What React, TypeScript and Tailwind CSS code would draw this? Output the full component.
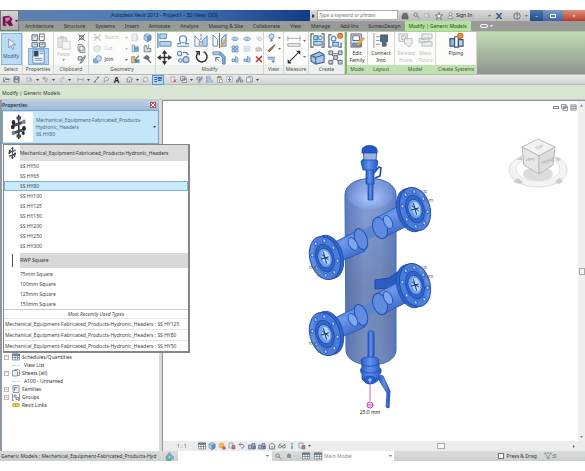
import React from 'react';

type IconProps = { name: string; className?: string };

const BLUE = '#5588c0';
const DARK = '#5c6570';
const PALE = '#b9d2ea';
const GREY = '#c4c7ca';

const glyphs: Record<string, React.ReactNode> = {
  cursor: <path d="M5 1v12l3-3 2 5 2-1-2-5h4z" fill="#fff" stroke="#5b7ea8" />,
  typeProps: (
    <g stroke={DARK} fill="#dfe7ee">
      <path d="M1 2h6v6H1zM1 10h6v5H1zM9 10h6v5H9z" />
      <path d="M9 1h5v7H9z" fill="#fff" />
      <path d="M3 4h2M3 12h3M10 4h3M10 12h4" stroke={BLUE} />
    </g>
  ),
  propPanel: (
    <g>
      <path d="M2 1h12v14H2z" fill="#fff" stroke={BLUE} />
      <path d="M3 2h5v6H3z" fill="#31485f" />
      <path d="M9 3h4M9 5h4M4 10h8M4 12h8" stroke={BLUE} />
    </g>
  ),
  paste: (
    <g stroke={GREY}>
      <path d="M1 2h10v11H1z" fill="#e4e4e4" />
      <path d="M4 0h4v3H4z" fill="#d0d0d0" />
      <path d="M6 6h9v9H6z" fill="#f6f6f6" />
    </g>
  ),
  cut: <path d="M2 2l12 12M14 2L2 14M5 5h6v6H5z" stroke={DARK} strokeWidth="1.6" fill="none" />,
  copy: <path d="M2 1h7l2 3v8H2zM5 4h7l2 3v8H5z" fill="#fff" stroke={DARK} strokeWidth="1.3" />,
  brush: <path d="M2 3h7v6H2zM14 1l-6 9-3 5 5-3 5-9z" fill="#d4dae0" stroke={DARK} strokeWidth="1.4" />,
  notch: <path d="M2 2l12 12M14 2L2 14M1 8h6" stroke={GREY} strokeWidth="2" fill="none" />,
  cutGeo: <path d="M2 6l5-3 6 2-2 7-5 2-4-3z" fill="#eceeef" stroke={GREY} strokeWidth="1.5" />,
  join: (
    <g stroke={BLUE} strokeWidth="1.3">
      <path d="M1 7h8v7H1z" fill="#8db9e2" />
      <circle cx="10" cy="6" r="5" fill="#c4def5" />
    </g>
  ),
  cope: <path d="M2 2h8v12H2zM12 4v9" fill="#f2f2f2" stroke={GREY} strokeWidth="1.4" />,
  cube: (
    <g stroke={BLUE} strokeWidth="1.2">
      <path d="M2 4l6-3 6 3v8l-6 3-6-3z" fill={PALE} />
      <path d="M2 4l6 3 6-3M8 7v8" fill="none" />
      <path d="M8 7l6-3v8l-6 3z" fill="#6391c0" />
    </g>
  ),
  wall: (
    <g stroke={BLUE} strokeWidth="1.3">
      <path d="M2 2h4v12H2z" fill="#e9f2fb" />
      <path d="M6 5h7v3H6zM6 9h7v4H6z" fill="#8db3d9" />
    </g>
  ),
  split: (
    <g stroke={DARK} strokeWidth="1.2">
      <path d="M2 3h5v5h7v6H2z" fill="#d2d9e0" />
      <path d="M10 1v6" />
    </g>
  ),
  paint: (
    <g>
      <path d="M1 3h6v11H1z" fill="#f3c74d" stroke={DARK} />
      <path d="M7 8h8v6H7z" fill={BLUE} />
      <path d="M14 1L7 9" stroke={DARK} strokeWidth="2" />
    </g>
  ),
  hammer: <path d="M2 5l5-4 4 4-3 3zM8 7l6 7" stroke={DARK} strokeWidth="2.2" fill="#7b8794" />,
  align: (
    <g stroke={BLUE}>
      <path d="M1 0v16" strokeWidth="1.4" />
      <path d="M3 1h7v5H3zM3 9h12v5H3z" fill={PALE} />
    </g>
  ),
  offset: (
    <path d="M1 14h14M1 11h4c0-2-1-3-1-5a4 4 0 018 0c0 2-1 3-1 5h4M6 10h4" fill="none" stroke={BLUE} strokeWidth="1.4" />
  ),
  mirror: (
    <g stroke={BLUE}>
      <path d="M1 2l5 5v7H1z" fill="#fff" />
      <path d="M15 2l-5 5v7h5z" fill={PALE} />
      <path d="M8 0v16" stroke={DARK} strokeDasharray="3 1" />
    </g>
  ),
  mirrorPick: (
    <g stroke={BLUE}>
      <path d="M1 2l5 5v7H1z" fill="#fff" />
      <path d="M15 1l-5 5v8h5z" fill={PALE} />
      <path d="M8 0v16" stroke={DARK} />
      <path d="M15 7l-6 8" stroke="#e0a63c" strokeWidth="2.4" />
    </g>
  ),
  move: (
    <g fill="#30343a">
      <path d="M8 0l3 4H5zM8 16l3-4H5zM0 8l4-3v6zM16 8l-4-3v6z" />
      <path d="M8 3v10M3 8h10" stroke="#30343a" strokeWidth="1.6" />
    </g>
  ),
  copyMod: (
    <g stroke={BLUE} fill="#eef5fb" strokeWidth="1.3">
      <circle cx="4" cy="4" r="2.6" />
      <circle cx="5" cy="12" r="2" />
      <circle cx="11.500" cy="11" r="3.4" fill={PALE} />
      <path d="M8 3c3-1 5 0 6 3" stroke={DARK} fill="none" />
    </g>
  ),
  rotate: (
    <g fill="none" stroke="#30343a" strokeWidth="1.7">
      <path d="M5 3a6 6 0 106-1" />
      <path d="M2 2l4 0v4" />
    </g>
  ),
  trim: (
    <g stroke={BLUE}>
      <path d="M1 2h8v3H1z" fill={PALE} />
      <path d="M9 2l5 5v8h-3V8L8 5z" fill="#7facd8" />
      <path d="M4 8l4 4M4 12V8h4" fill="none" stroke={DARK} />
    </g>
  ),
  oval: <path d="M1 8c3-5 11-5 14 0-3 4-11 4-14 0zM5 8h6" fill="#e6f0f9" stroke={BLUE} strokeWidth="1.6" />,
  grid: <path d="M2 2h5v5H2zM9 2h5v5H9zM2 9h5v5H2zM9 9h5v5H9z" fill={PALE} stroke={BLUE} strokeWidth="1.5" />,
  box: <path d="M2 3h12v10H2zM5 6h6v4H5z" fill="#f1f1f1" stroke={GREY} strokeWidth="1.2" />,
  viewMax: <path d="M2 2h12v12H2zM2 6h12M2 10h12" fill="#eee" stroke="#85888c" strokeWidth="2" />,
  pin: <path d="M3 2l5 6M10 3l4 5-3 4-5-4zM3 6l5 6" fill="#eee" stroke="#aeb1b5" strokeWidth="1.2" />,
  pin2: <path d="M2 6h8v6H2zM8 3l5 5v5" fill="#ecdcdc" stroke="#a99a9e" strokeWidth="1.4" />,
  scale: <path d="M2 13h5V8H2zM9 14V3l5 3v8z" fill={PALE} stroke={BLUE} strokeWidth="1.5" />,
  redx: <path d="M2 3l12 11M14 2L2 14" stroke="#c93434" strokeWidth="3.2" />,
  bulb: (
    <g>
      <circle cx="8" cy="6" r="4.500" fill="#b9dcf5" stroke={BLUE} strokeWidth="1.3" />
      <path d="M6 11h4v4H6z" fill="#77818c" />
    </g>
  ),
  tint: <path d="M14 1l-5 8-5 5-2-3 5-4z" fill="#b98545" stroke="#4d4133" strokeWidth="1.3" />,
  lines: <path d="M1 4h13M1 7h13M8 11h6M11 9v5" stroke={BLUE} strokeWidth="1.8" />,
  ruler: <path d="M1 2v6M15 2v6M1 5h14M1 11h14v3H1z" stroke="#9aa0a6" fill="#eef0f2" />,
  measure: (
    <g stroke="#30343a" strokeWidth="1.3" fill="#30343a">
      <path d="M3 13L13 3" />
      <path d="M1 11l4 4-4 0zM11 1l4 4V1z" strokeWidth="0.500" />
    </g>
  ),
  group: (
    <g stroke={BLUE} strokeWidth="1.3">
      <path d="M4 1H1v14h3M12 1h3v14h-3" fill="none" stroke={DARK} />
      <path d="M4 3h4v4H4zM4 9h9v4H4z" fill={PALE} />
      <circle cx="11" cy="5" r="2" fill="#fff" />
    </g>
  ),
  similar: (
    <g stroke={BLUE} strokeWidth="1.3">
      <path d="M4 2H1v13h3M11 15h3v-5" fill="none" stroke={DARK} />
      <circle cx="6" cy="6" r="2.500" fill="#fff" />
      <path d="M5 10h6v4H5z" fill={PALE} />
      <circle cx="13" cy="3" r="2.600" fill="#ee8e48" stroke="#d06a22" />
    </g>
  ),
  parts: (
    <g stroke="#3e6893" strokeWidth="1.2">
      <path d="M1 6l9-4 5 3v8l-9 2-5-3z" fill="#a9c9e6" />
      <path d="M1 6l5 2v7M6 8l9-3" fill="none" />
    </g>
  ),
  assembly: (
    <g stroke={DARK} fill={PALE}>
      <path d="M3 4l9 9M12 4l-9 9M3 4h10" />
      <path d="M1 1h4v4H1zM11 1h4v4h-4zM1 11h4v4H1zM11 11h4v4h-4zM6 6h4v4H6z" />
    </g>
  ),
  editFamily: (
    <g stroke={DARK}>
      <path d="M1 1h11v14H1z" fill="#d7e1eb" />
      <path d="M3 3h7v5H3z" fill="#fff" />
      <path d="M3 11h8v3H3z" fill="#8ba5bf" />
      <path d="M15 5l-7 8" stroke="#e0a63c" strokeWidth="2.600" />
    </g>
  ),
  connect: (
    <g stroke={DARK}>
      <path d="M1 0v16M3 4h4M3 8h4M3 12h4" stroke="#8c949d" />
      <path d="M8 2h8v7h-2v5h-4V9H8z" fill="#4f6880" />
    </g>
  ),
  host: (
    <g stroke="#b6babd" fill="#ebedee">
      <path d="M1 1h9v8H1zM4 3h4v4H4z" />
      <path d="M7 6h8v5l-3 4-5-4z" />
    </g>
  ),
  floors: (
    <g stroke="#b6babd" fill="#ebedee">
      <path d="M4 1h11v5L4 7zM1 6l11-1v4L1 10zM4 10l11-1v5H4z" />
    </g>
  ),
  piping: (
    <g stroke="#36536f" strokeWidth="1.2">
      <path d="M1 6h5v8H1z" fill="#8fb6dc" />
      <path d="M6 4h4v11H6z" fill="#fff" />
      <path d="M10 7h5v7h-5z" fill="#b8d2ea" />
      <circle cx="12" cy="3" r="2.800" fill="#ee8e48" stroke="#d06a22" />
    </g>
  ),
  open: <path d="M1 13V4h5l1 2h7v2H5zM5 8h10l-3 5H1z" fill="#eef0f2" stroke={DARK} strokeWidth="1.3" />,
  save: (
    <g stroke={DARK} strokeWidth="1.4">
      <path d="M2 2h12v12H2z" fill="#8c98a8" />
      <path d="M5 2h6v4H5zM4 9h8v5H4z" fill="#fff" />
    </g>
  ),
  sync: <path d="M2 4h8v8H2zM8 9l4-4 2 7z" fill="#e4e4e4" stroke="#999da1" strokeWidth="1.3" />,
  undo: <path d="M2 5h8a4 4 0 010 7H6M2 5l4-4M2 5l4 4" fill="none" stroke="#70757b" strokeWidth="1.6" />,
  redo: <path d="M14 5H6a4 4 0 000 7h4M14 5l-4-4M14 5l-4 4" fill="none" stroke="#a8abae" strokeWidth="1.5" />,
  dim: <path d="M2 4v8M14 4v8M2 8h12" fill="none" stroke="#8d9196" strokeWidth="1.5" />,
  line: <path d="M2 14L14 2M2 14l5-1M14 2L9 3" stroke={DARK} strokeWidth="1.8" fill="none" />,
  tag: <path d="M3 8a5 4 0 119 1l-5 1-4 4z" fill="#f2f2f2" stroke="#666b70" strokeWidth="1.4" />,
  home: <path d="M1 8l7-6 7 6M3 7v7h10V7M8 8v6" fill="#eee" stroke={DARK} strokeWidth="1.5" />,
  section: <path d="M3 8a5 5 0 1110 0 5 5 0 01-10 0zM2 14l4-3" fill="#eee" stroke="#85898e" strokeWidth="1.5" />,
  thin: <path d="M1 3h5M1 7h5M1 11h5M8 3h7v3H8zM8 9h7" stroke="#2d5e93" strokeWidth="2" fill="#6f9fcd" />,
  closeWin: (
    <g>
      <path d="M2 2h9v11H2z" fill="#eee" stroke="#777" />
      <path d="M8 8l6 6M14 8l-6 6" stroke="#cf3a3a" strokeWidth="2" />
    </g>
  ),
  windows: <path d="M1 1h10v9H1zM5 5h10v10H5zM7 8h6" fill="#f4f4f4" stroke={DARK} strokeWidth="1.5" />,
  clip: (
    <g stroke={DARK}>
      <path d="M3 2h9v13H3z" fill="#eee6cc" />
      <path d="M5 0h5v4H5z" fill="#b98c45" />
      <path d="M8 8h6v7H8z" fill="#fff" />
    </g>
  ),
  download: (
    <g>
      <path d="M2 1h12v12H2z" fill="#fff" stroke={DARK} />
      <path d="M8 3v7M5 7l3 4 3-4" fill="none" stroke="#2f70b4" strokeWidth="2" />
    </g>
  ),
  people: <path d="M6 2h4v4H6zM1 9h5v5H1zM10 9h5v5h-5zM8 6v3M3 9h10" fill="#c0c5ca" stroke={DARK} strokeWidth="1.3" />,
  binoc: <path d="M2 14V8l3-6h2v12zM9 14V2h2l3 6v6z" fill="#6a6f76" stroke="#3b4047" />,
  key: (
    <g fill="none" stroke="#5d6269" strokeWidth="1.6">
      <circle cx="6" cy="6" r="4" />
      <path d="M9 9l6 5" />
    </g>
  ),
  star: <path d="M8 1l2 5h5l-4 3 2 6-5-4-5 4 2-6-4-3h5z" fill="#f6f6f6" stroke="#4b5057" strokeWidth="1.3" />,
  user: (
    <g fill="#e7e7e7" stroke="#60656b" strokeWidth="1.3">
      <circle cx="8" cy="5" r="3.500" />
      <path d="M2 15c0-8 12-8 12 0z" />
    </g>
  ),
  exchange: <path d="M1 2h4l3 4 3-4h4l-5 6 5 6h-4l-3-4-3 4H1l5-6z" fill="#3c5a86" />,
  help: (
    <g fill="none" stroke="#525c68" strokeWidth="1.5">
      <circle cx="8" cy="8" r="6.500" />
      <path d="M6 6c0-3 5-2 4 0l-2 3M8 11v2" />
    </g>
  ),
  schedule: (
    <g stroke="#5a6a7a" strokeWidth="1.3">
      <path d="M1 2h14v12H1z" fill="#fff" />
      <path d="M1 2h14v3H1z" fill="#7d8b99" />
      <path d="M1 9h14M6 5v9M11 5v9" />
    </g>
  ),
  sheets: <path d="M1 3h8l2 2v9H1zM5 1h8l2 2v10h-4" fill="#eef1f4" stroke="#5b646d" strokeWidth="1.3" />,
  families: <path d="M2 1h12v14H2zM5 12V5h6M5 8h4" fill="#f3f3f3" stroke="#6b7178" strokeWidth="1.4" />,
  groups: <path d="M1 1v14h3M15 1v14h-3M4 4h4v4H4zM8 9h5v4H8z" fill="#e7eaed" stroke="#6b7178" strokeWidth="1.4" />,
  link: (
    <g fill="#f6d35c" stroke="#b78b14" strokeWidth="1.4">
      <rect x="1" y="5" width="8" height="6" rx="3" />
      <rect x="7" y="5" width="8" height="6" rx="3" />
    </g>
  ),
  recycle: <path d="M8 1l4 5-3 2-1-3-3 4-3-1zM2 9l4 1-1 3h4v2H3zM10 14l-1-4 5-3 1 5z" fill="#7fc3cf" stroke="#3c8190" />,
  sun: (
    <g>
      <circle cx="7" cy="7" r="5" fill="#f7bd58" stroke="#cf7f22" />
      <path d="M9 9h6v6H9z" fill="#cd5544" />
    </g>
  ),
  shadow: (
    <g stroke="#576b80">
      <path d="M2 2h8v10H2z" fill="#e4ecf3" />
      <path d="M8 7h6v7H8z" fill="#d47464" />
    </g>
  ),
  crop: (
    <g stroke="#48698d" strokeWidth="1.3">
      <path d="M1 6h6v8H1zM8 3h6v11H8z" fill="#9dbbd9" />
      <path d="M11 8h4v5h-4z" fill="#d56a56" />
    </g>
  ),
  glasses: (
    <g fill="#d4e5e2" stroke="#55636b" strokeWidth="1.4">
      <circle cx="4" cy="9" r="3" />
      <circle cx="12" cy="9" r="3" />
      <path d="M2 6l3-3M14 6l-3-3M7 9h2" />
    </g>
  ),
  info: <path d="M6 2h4v3H6zM6 7h4v7H6z" fill="#71a6d4" />,
  filter: <path d="M1 2h14l-5 6v6l-4-2V8z" fill="#d5d9dd" stroke="#666c73" strokeWidth="1.3" />,
  dot: <path d="M4 4h8v8H4zM8 1v4" fill="#8b9097" stroke="#6b7077" strokeWidth="1.5" />,
  valve: (
    <g fill="#24282e">
      <path d="M8 0h1v16H8z" />
      <path d="M7 1h3v2H7zM5 6l6-2v2L5 8zM5 11l6-2v2l-6 2zM7 13h3v2H7z" fill="#474c53" />
      <ellipse cx="5" cy="5" rx="1.200" ry="1.600" />
      <ellipse cx="12" cy="4.500" rx="1.100" ry="1.500" fill="#7b8087" />
      <ellipse cx="4.500" cy="8" rx="1.200" ry="1.500" />
      <ellipse cx="12" cy="9" rx="1.300" ry="1.600" />
      <ellipse cx="5" cy="12" rx="1.200" ry="1.500" fill="#7b8087" />
      <ellipse cx="11.500" cy="12" rx="1" ry="1.300" />
    </g>
  ),
};

function Icon({ name, className = 'size-[9px]' }: IconProps) {
  return (
    <svg viewBox="0 0 16 16" className={`shrink-0 ${className}`} fill="none" aria-hidden="true">
      {glyphs[name]}
    </svg>
  );
}

function Caret({ className = 'text-[#777]' }: { className?: string }) {
  return (
    <svg viewBox="0 0 6 4" className={`h-[2px] w-[3px] shrink-0 ${className}`} aria-hidden="true">
      <path d="M0 0h6L3 4z" fill="currentColor" />
    </svg>
  );
}

function Tool({ name, size = 'size-[9px]' }: { name: string; size?: string }) {
  return (
    <button type="button" aria-label={name} className="flex shrink-0 items-center justify-center">
      <Icon name={name} className={size} />
    </button>
  );
}

function Panel({
  title,
  width,
  green = false,
  children,
}: {
  title: string;
  width: string;
  green?: boolean;
  children: React.ReactNode;
}) {
  return (
    <section className={`flex shrink-0 flex-col border-r border-[#d3d9d0] bg-[#fcfdfb] ${width}`}>
      <div className="flex h-[33px] items-center justify-center">{children}</div>
      <h2
        className={`h-[9px] text-center whitespace-nowrap leading-[8px] text-[#4c524c] ${green ? 'bg-[#bfe3ac]' : 'bg-[#eef0ed]'}`}
      >
        {title}
      </h2>
    </section>
  );
}

function Column({ names, size }: { names: string[]; size?: string }) {
  return (
    <div className="flex flex-col gap-[2px]">
      {names.map((n, i) => (
        <Tool key={i} name={n} size={size} />
      ))}
    </div>
  );
}

const tabs = [
  'Architecture',
  'Structure',
  'Systems',
  'Insert',
  'Annotate',
  'Analyze',
  'Massing & Site',
  'Collaborate',
  'View',
  'Manage',
  'Add-Ins',
  'SumexDesign',
];

function TitleArea() {
  return (
    <header className="flex h-[21px] shrink-0">
      <button
        type="button"
        aria-label="Application menu"
        className="flex w-[19px] shrink-0 items-center justify-center gap-[1px] border border-[#777] bg-linear-to-b from-[#d7d4d8] to-[#aaa6ac]"
      >
        <svg viewBox="0 0 16 16" className="size-[12px]" aria-hidden="true">
          <path d="M1 2l8-1 5 4-2 4 3 5-5 1-3-4-2 4-4-1z" fill="#73164e" />
          <path d="M4 4l5-1 2 2-3 3-3 1zM4 10l3 1-2 3z" fill="#cf83b5" />
        </svg>
        <Caret className="text-[#222]" />
      </button>
      <div className="flex min-w-0 flex-1 flex-col">
        <div className="flex h-[11px] bg-linear-to-b from-[#dadada] to-[#bcbcbc]">
          <div className="flex flex-1 items-center justify-center bg-linear-to-r from-[#5f7fae] via-[#477cba] to-[#113c85] leading-[11px] whitespace-nowrap text-[#0f2142]">
            Autodesk Revit 2013 - Project1 - 3D View: {'{3D}'}
          </div>
          <div className="flex w-[7px] items-center justify-center">
            <svg viewBox="0 0 4 6" className="h-[4px] w-[3px]" aria-hidden="true">
              <path d="M0 0l4 3-4 3z" fill="#222" />
            </svg>
          </div>
          <input
            aria-label="Search help"
            placeholder="Type a keyword or phrase"
            className="h-[10px] w-[81px] shrink-0 border border-[#aaa] bg-white px-[1px] italic leading-[8px] placeholder:text-[#777]"
          />
          <div className="flex w-[76px] shrink-0 items-center gap-[4px] pl-[3px]">
            <Tool name="binoc" size="size-[8px]" />
            <Tool name="key" size="size-[7px]" />
            <Tool name="sync" size="size-[7px]" />
            <Tool name="star" size="size-[8px]" />
            <a href="#sign-in" className="flex items-center gap-[2px] whitespace-nowrap text-[#222]">
              <Icon name="user" className="size-[7px]" />
              Sign In
            </a>
          </div>
          <div className="flex w-[56px] shrink-0 items-center justify-end gap-[4px] pr-[2px]">
            <Caret />
            <Tool name="exchange" size="size-[8px]" />
            <span className="w-[2px]" />
            <Tool name="help" size="size-[8px]" />
            <Caret />
          </div>
          <div className="flex shrink-0 text-white">
            <button type="button" aria-label="Minimize" className="w-[13px] bg-linear-to-b from-[#4c75b0] to-[#214d8c] leading-[8px]">
              –
            </button>
            <button type="button" aria-label="Restore" className="flex w-[20px] items-center justify-center bg-linear-to-b from-[#7d9cc8] to-[#3a659f]">
              <span className="h-[4px] w-[6px] border border-white" />
            </button>
            <button type="button" aria-label="Close" className="w-[22px] bg-linear-to-b from-[#e08f7d] to-[#b93a28] leading-[8px]">
              ×
            </button>
          </div>
        </div>
        <nav className="flex h-[10px] items-center bg-[#999b99] leading-[10px] whitespace-nowrap text-[#2b2e2b]">
          <div className="flex gap-[10px] pr-[4px] pl-[6px]">
            {tabs.map((t) => (
              <button key={t} type="button">
                {t}
              </button>
            ))}
          </div>
          <button type="button" className="mr-[9px] h-[10px] bg-[#b5e29d] px-[4px] text-[#2a3a22]">
            Modify | Generic Models
          </button>
          <button type="button" aria-label="Ribbon display" className="flex items-center gap-[2px] text-white">
            <span className="h-[4px] w-[8px] rounded-full border border-white" />
            <Caret className="text-white" />
          </button>
        </nav>
      </div>
    </header>
  );
}

function Labelled({ name, label, faded = false }: { name: string; label: string; faded?: boolean }) {
  return (
    <button type="button" className={`flex items-center gap-[3px] ${faded ? 'text-[#bcbfc2]' : 'text-[#333]'}`}>
      <Icon name={name} />
      <span className="w-[17px] text-left leading-[9px]">{label}</span>
      <Caret className={faded ? 'text-[#bbb]' : 'text-[#777]'} />
    </button>
  );
}

function BigTool({ name, lines, faded = false }: { name: string; lines: string[]; faded?: boolean }) {
  return (
    <button
      type="button"
      className={`flex h-[32px] flex-col items-center leading-[7px] whitespace-nowrap ${faded ? 'text-[#bcbfc2]' : 'text-[#333]'}`}
    >
      <Icon name={name} className="mb-[2px] size-[15px]" />
      {lines.map((l) => (
        <span key={l}>{l}</span>
      ))}
    </button>
  );
}

function Ribbon() {
  return (
    <div className="flex h-[43px] shrink-0 border-t border-[#a9cf98] bg-linear-to-b from-[#c0dcb4] to-[#8f958d]">
      <Panel title="Select" width="w-[23px]">
        <button type="button" className="flex h-[32px] w-[21px] flex-col items-center justify-center gap-[3px] border border-[#86b4dc] bg-[#bcdcf5] text-[#35577c]">
          <Icon name="cursor" className="size-[12px]" />
          <span className="leading-[7px]">Modify</span>
        </button>
      </Panel>
      <Panel title="Properties" width="w-[31px]">
        <div className="flex flex-col items-center">
          <Tool name="typeProps" size="size-[15px]" />
          <button type="button" aria-label="Properties" className="border border-[#7daedb] bg-[#b4d6f2] px-[2px]">
            <Icon name="propPanel" className="size-[15px]" />
          </button>
        </div>
      </Panel>
      <Panel title="Clipboard" width="w-[35px]">
        <div className="flex items-center gap-[6px]">
          <button type="button" className="flex flex-col items-center gap-[1px] text-[#bcbfc2]">
            <Icon name="paste" className="size-[14px]" />
            <span className="leading-[7px]">Paste</span>
            <Caret className="text-[#999]" />
          </button>
          <Column names={['cut', 'copy', 'brush']} />
        </div>
      </Panel>
      <Panel title="Geometry" width="w-[67px]">
        <div className="flex gap-[3px]">
          <div className="flex flex-col gap-[2px]">
            <Labelled name="notch" label="Notch" faded />
            <Labelled name="cutGeo" label="Cut" faded />
            <Labelled name="join" label="Join" />
          </div>
          <Column names={['cope', 'wall', 'paint']} />
          <Column names={['cube', 'split', 'hammer']} />
        </div>
      </Panel>
      <Panel title="Modify" width="w-[108px]">
        <div className="flex items-center gap-[4px]">
          <Column names={['align', 'move']} size="size-[15px]" />
          <Column names={['offset', 'copyMod']} size="size-[14px]" />
          <Column names={['mirror', 'rotate']} size="size-[14px]" />
          <Column names={['mirrorPick', 'trim']} size="size-[15px]" />
          <Column names={['oval', 'grid', 'scale']} size="size-[8px]" />
          <Column names={['oval', 'box', 'scale']} size="size-[8px]" />
          <Column names={['pin', 'pin2', 'redx']} size="size-[8px]" />
        </div>
      </Panel>
      <Panel title="View" width="w-[20px]">
        <div className="flex items-center gap-[2px]">
          <Column names={['bulb', 'tint', 'lines']} />
          <div className="flex flex-col gap-[9px] pb-[11px]">
            <Caret />
            <Caret />
          </div>
        </div>
      </Panel>
      <Panel title="Measure" width="w-[25px]">
        <div className="flex items-center gap-[2px]">
          <Column names={['ruler', 'measure']} size="size-[14px]" />
          <div className="flex flex-col gap-[14px]">
            <Caret />
            <Caret />
          </div>
        </div>
      </Panel>
      <Panel title="Create" width="w-[36px]">
        <div className="flex gap-[3px]">
          <Column names={['group', 'parts']} size="size-[15px]" />
          <Column names={['similar', 'assembly']} size="size-[15px]" />
        </div>
      </Panel>
      <div className="w-[2px] shrink-0 bg-[#83b36f]" />
      <Panel title="Mode" width="w-[21px]" green>
        <BigTool name="editFamily" lines={['Edit', 'Family']} />
      </Panel>
      <Panel title="Layout" width="w-[27px]" green>
        <BigTool name="connect" lines={['Connect', 'Into']} />
      </Panel>
      <Panel title="Model" width="w-[41px]" green>
        <div className="flex gap-[3px]">
          <BigTool name="host" lines={['Related', 'Hosts']} faded />
          <BigTool name="floors" lines={['Mass', 'Floors']} faded />
        </div>
      </Panel>
      <Panel title="Create Systems" width="w-[41px]" green>
        <BigTool name="piping" lines={['Piping']} />
      </Panel>
    </div>
  );
}

const quick = [
  'open', 'save', ' ', 'sync', '|', 'undo', '|', 'redo', '|', ' ', 'dim', '|', 'line', 'tag', 'A', ' ', 'home', '|', 'section', '*',
  ' ', 'closeWin', 'windows', '|', 'brush', 'align', 'clip', 'download', 'people', 'sheets', '|',
];

function QuickBar() {
  return (
    <div className="flex h-[11px] shrink-0 items-center gap-[3px] border-y border-[#b6b9b6] bg-linear-to-b from-[#eaebea] to-[#d2d4d3] pl-[3px]">
      {quick.map((q, i) => {
        if (q === '|') return <Caret key={i} className="text-[#444]" />;
        if (q === ' ') return <span key={i} />;
        if (q === 'A')
          return (
            <button key={i} type="button" className="w-[7px] text-[8px] leading-[9px] font-bold text-[#222]">
              A
            </button>
          );
        if (q === '*')
          return (
            <button key={i} type="button" aria-label="Thin lines" className="border border-[#5a95d0] bg-[#b4d6f5] px-[1px]">
              <Icon name="thin" className="size-[8px]" />
            </button>
          );
        return <Tool key={i} name={q} size="size-[7px]" />;
      })}
    </div>
  );
}

const types = ['SS HY50', 'SS HY65', 'SS HY80', 'SS HY100', 'SS HY125', 'SS HY150', 'SS HY200', 'SS HY250', 'SS HY300'];
const squares = ['75mm Square', '100mm Square', '125mm Square', '150mm Square'];
const family = 'Mechanical_Equipment-Fabricated_Products-Hydronic_Headers';
const recent = ['SS HY125', 'SS HY80', 'SS HY50'];

function TypeMenu() {
  return (
    <div className="absolute top-[44px] left-[1px] z-10 w-[187px] border border-r-2 border-b-2 border-[#84888d] bg-white whitespace-nowrap text-[#444]">
      <div className="flex h-[16px] items-center">
        <div className="flex w-[16px] justify-center">
          <Icon name="valve" className="size-[12px]" />
        </div>
        <div className="flex-1 bg-[#dcdcdc] leading-[16px] text-[#333]">{family}</div>
      </div>
      {types.map((t) => (
        <button
          key={t}
          type="button"
          className={`block h-[10px] w-full border pl-[15px] text-left leading-[8px] ${t === 'SS HY80' ? 'border-[#7db5d8] bg-[#c9eafb]' : 'border-transparent'}`}
        >
          {t}
        </button>
      ))}
      <div className="mt-[2px] flex h-[15px] items-center">
        <div className="flex w-[16px] justify-center">
          <span className="h-[13px] w-px bg-[#555]" />
        </div>
        <div className="flex-1 bg-[#d8d8d8] leading-[15px] text-[#333]">RWP Square</div>
      </div>
      <div className="pt-[1px]">
        {squares.map((t) => (
          <button key={t} type="button" className="block h-[10px] w-full pl-[16px] text-left leading-[10px]">
            {t}
          </button>
        ))}
      </div>
      <div className="h-[9px] border-t border-[#ccc] text-center leading-[8px] italic">Most Recently Used Types</div>
      {recent.map((r) => (
        <button key={r} type="button" className="block h-[11px] w-full border-t border-[#e3e3e3] pl-[1px] text-left leading-[10px]">
          {family} : {r}
        </button>
      ))}
    </div>
  );
}

const tree = [
  { label: 'Schedules/Quantities', icon: 'schedule', mark: '−' },
  { label: 'View List', icon: '', mark: '' },
  { label: 'Sheets (all)', icon: 'sheets', mark: '−' },
  { label: 'A100 - Unnamed', icon: '', mark: '' },
  { label: 'Families', icon: 'families', mark: '+' },
  { label: 'Groups', icon: 'groups', mark: '+' },
  { label: 'Revit Links', icon: 'link', mark: '' },
];

function Sidebar() {
  return (
    <aside className="relative flex w-[159px] shrink-0 flex-col border-l-2 border-[#8f979f] bg-white">
      <div className="flex h-[10px] items-center justify-between bg-linear-to-b from-[#bdcfe5] to-[#9fb9d8] pr-[3px] leading-[10px] font-semibold text-[#26354a]">
        <h2>Properties</h2>
        <button type="button" aria-label="Close properties" className="flex size-[6px] items-center justify-center bg-[#bb5b64]">
          <svg viewBox="0 0 4 4" className="size-[4px]" aria-hidden="true">
            <path d="M0 0l4 4M4 0L0 4" stroke="#fff" />
          </svg>
        </button>
      </div>
      <button
        type="button"
        className="flex h-[34px] shrink-0 items-center border border-[#79a5c4] bg-[#c4e6f8] pr-[2px] text-left text-[#3d6787]"
      >
        <span className="flex h-[30px] w-[30px] items-center justify-center bg-white">
          <Icon name="valve" className="size-[24px]" />
        </span>
        <span className="flex-1 pl-[3px] leading-[7px] whitespace-nowrap">
          Mechanical_Equipment-Fabricated_Products-
          <br />
          Hydronic_Headers
          <br />
          SS HY80
        </span>
        <Caret className="text-[#345]" />
      </button>
      <TypeMenu />
      <ul className="pt-[209px] text-[#333]">
        {tree.map((n) => (
          <li key={n.label} className="flex h-[8px] items-center pl-[2px] leading-[8px] whitespace-nowrap">
            <span className="flex w-[8px]">
              {n.mark && (
                <span className="flex size-[5px] items-center justify-center border border-[#bbb] text-[4px] leading-[4px]">{n.mark}</span>
              )}
            </span>
            {n.icon ? <Icon name={n.icon} className="size-[8px]" /> : <span className="w-[8px] border-t border-dotted border-[#bbb]" />}
            <span className={n.icon ? 'pl-[2px]' : 'pl-[4px]'}>{n.label}</span>
          </li>
        ))}
      </ul>
    </aside>
  );
}

function Flange({ x, y, side }: { x: number; y: number; side: 'left' | 'right' }) {
  const d = side === 'left' ? 4 : -4;
  const bolts = [0, 1, 2, 3, 4, 5, 6, 7].map((i) => (i * Math.PI) / 4 + 0.35);
  return (
    <g transform={`translate(${x} ${y}) rotate(-16)`}>
      <ellipse cx={d} cy="0" rx="14" ry="22" fill="#3265cb" stroke="#2453b5" />
      <ellipse cx="0" cy="0" rx="15" ry="22" fill="#4d80de" fillOpacity="0.900" stroke="#1f4fb2" />
      <ellipse cx="0" cy="0" rx="9" ry="14" fill="#3567cb" stroke="#2150b0" />
      {bolts.map((a) => (
        <ellipse key={a} cx={Math.cos(a) * 12} cy={Math.sin(a) * 18} rx="1.500" ry="2" fill="#a9ccfb" stroke="#1f4fb2" strokeWidth="0.800" />
      ))}
      <ellipse cx="0" cy="0" rx="7" ry="10" fill="#6d9eee" stroke="#1f4fb2" />
      <ellipse cx="1" cy="0" rx="4" ry="7" fill="#bdd6fb" />
      <path d="M-4 0h8M0-6V6M-2-4l5 7" stroke="#0d2f78" strokeWidth="0.900" />
    </g>
  );
}

function Branches({ dy }: { dy: number }) {
  return (
    <g transform={`translate(0 ${dy})`}>
      <path d="M364 228l12-6 5 11-14 6z" fill="#5b83d2" fillOpacity="0.800" />
      <path d="M333 242l26-13 6 21-28 12z" fill="url(#tube)" stroke="#2a59bd" />
      <ellipse cx="361" cy="238" rx="6" ry="11" transform="rotate(-20 361 238)" fill="#5f8cdf" stroke="#2050b2" />
      <ellipse cx="353" cy="243" rx="4" ry="7" transform="rotate(-30 353 243)" fill="#7da8ef" stroke="#2a59bd" />
      <path d="M376 217l30-16 7 21-30 15z" fill="url(#tube)" stroke="#2a59bd" />
      <path d="M397 205l12-6 6 20-12 6z" fill="#2d5fc8" fillOpacity="0.500" />
      <ellipse cx="380" cy="227" rx="7" ry="11" transform="rotate(-20 380 227)" fill="#5f8cdf" stroke="#2050b2" />
      <ellipse cx="388" cy="221" rx="4" ry="7" transform="rotate(-25 388 221)" fill="#7da8ef" stroke="#2a59bd" />
      <Flange x={325} y={257} side="left" />
      <Flange x={415} y={208} side="right" />
      <g fill="#666" fontSize="5">
        <text x="419" y="192">out</text>
        <text x="424" y="201">mm</text>
        <text x="309" y="268">mm</text>
        <text x="317" y="276">in</text>
      </g>
    </g>
  );
}

function HeaderModel() {
  return (
    <svg viewBox="305 140 132 276" className="h-[276px] w-[132px]" role="img" aria-label="Hydronic header 3D view">
      <defs>
        <linearGradient id="body" x1="0" x2="1" y1="0" y2="0">
          <stop offset="0" stopColor="#5f7ec4" />
          <stop offset="0.400" stopColor="#87a3e2" />
          <stop offset="0.700" stopColor="#7f9bd8" />
          <stop offset="1" stopColor="#6283ca" />
        </linearGradient>
        <linearGradient id="fade" x1="0" x2="0" y1="0" y2="1">
          <stop offset="0" stopColor="#50586b" stopOpacity="0" />
          <stop offset="0.600" stopColor="#50586b" stopOpacity="0.350" />
          <stop offset="1" stopColor="#50586b" stopOpacity="0.250" />
        </linearGradient>
        <radialGradient id="dome" cx="0.500" cy="0.600" r="0.600">
          <stop offset="0" stopColor="#b3ccfc" />
          <stop offset="1" stopColor="#7e9fea" stopOpacity="0.100" />
        </radialGradient>
        <linearGradient id="tube" x1="0" x2="0.400" y1="0" y2="1">
          <stop offset="0" stopColor="#4474d4" />
          <stop offset="0.450" stopColor="#6c99e9" />
          <stop offset="1" stopColor="#3867c6" />
        </linearGradient>
        <linearGradient id="valveBody" x1="0" x2="1" y1="0" y2="0">
          <stop offset="0" stopColor="#2558bf" />
          <stop offset="0.450" stopColor="#5f92ea" />
          <stop offset="1" stopColor="#2558bf" />
        </linearGradient>
      </defs>
      <path d="M345 194c0-22 51-22 51 0v155c0 20-50 20-50 0z" fill="url(#body)" stroke="#3d63bb" />
      <path d="M346 194c0-20 49-20 49 0v155c0 19-48 19-48 0z" fill="url(#fade)" />
      <ellipse cx="370" cy="194" rx="23" ry="14" fill="url(#dome)" />
      <path d="M375 279l14-2 10-7 5 9-13 8-16 1z" fill="#2b5cc2" stroke="#1c4bac" />
      <Branches dy={0} />
      <Branches dy={76} />
      <g stroke="#1c4bac" strokeWidth="0.800" fill="url(#valveBody)">
        <path d="M368 180h5v19h-5z" />
        <path d="M366 168h8v15h-8z" />
        <path d="M374 172l5-6 2 1-1 8-5 2" fill="none" strokeWidth="1.600" />
        <path d="M361 161c0-5 17-5 17 0l-2 8h-13z" />
        <path d="M363 149h14l-1 10h-12z" fill="#9ab3e2" />
        <path d="M362 149c0-6 15-6 15 0v3h-15z" fill="#2358c4" />
        <path d="M368 332c0-3 6-3 6 0v26h-6z" />
        <path d="M361 359c0-4 18-4 18 0v7c3 2 3 5 0 8v4c-4 6-13 6-17 0v-5c-2-2-2-5 0-7z" />
        <path d="M361 363c5 3 13 3 18 0M361 369c5 4 13 4 19 0M363 377c4 2 11 2 15 0" fill="none" />
        <ellipse cx="370" cy="379" rx="6" ry="4" fill="#2a5ec8" />
        <path d="M368 379h4M370 377v5" stroke="#d4e6ff" />
        <path d="M380 374l3 1 7 15-1 17-3-1 1-14-8-13z" />
      </g>
      <path d="M370 383v17" stroke="#ba68ba" />
      <circle cx="370" cy="404" r="3" fill="#f5d8f3" stroke="#c34cc0" />
      <path d="M367 404h6" stroke="#c34cc0" />
      <text x="370" y="413" textAnchor="middle" fontSize="5" fill="#222">
        25.0 mm
      </text>
    </svg>
  );
}

function ViewCube() {
  return (
    <svg viewBox="0 0 62 54" className="absolute top-[35px] right-[16px] h-[54px] w-[62px]" role="img" aria-label="View cube">
      <ellipse cx="31" cy="34" rx="29" ry="17" fill="#f4f4f4" stroke="#dcdcdc" />
      <ellipse cx="31" cy="33" rx="22" ry="12" fill="#fff" stroke="#e2e2e2" />
      <ellipse cx="31" cy="38" rx="15" ry="7" fill="#dcdcdc" />
      <g fill="#cbcbcb">
        <path d="M6 46l5-4 5 4-3 2zM48 45l5-3 3 4-5 2zM9 24l5-3 2 3zM48 21l6 2-3 3z" />
      </g>
      <g stroke="#b9b9b9" strokeLinejoin="round">
        <path d="M31 3l17 8-16 9-17-9z" fill="#f3f3f3" />
        <path d="M15 11l17 9v18l-15-9z" fill="#e7e7e7" />
        <path d="M32 20l16-9-2 18-14 9z" fill="#dedede" />
      </g>
      <g fill="#999" fontSize="4">
        <text x="28" y="13" transform="rotate(-20 31 11)">TOP</text>
        <text x="19" y="25">LEFT</text>
        <text x="34" y="27" transform="rotate(-18 39 25)">FRONT</text>
      </g>
    </svg>
  );
}

function Canvas() {
  return (
    <main className="relative flex min-w-0 flex-1 flex-col border-t border-l border-[#8e9499] bg-white">
      <div className="flex min-h-0 flex-1">
        <div className="flex flex-1 justify-center pt-[40px]">
          <HeaderModel />
        </div>
        <div className="flex w-[7px] shrink-0 flex-col items-center justify-between bg-[#efefef] py-[3px]">
          <svg viewBox="0 0 6 4" className="h-[3px] w-[3px]" aria-hidden="true"><path d="M0 4h6L3 0z" fill="#777" /></svg>
          <span className="h-[7px] w-[6px] border border-[#aaa] bg-[#f8f8f8]" />
          <Caret />
        </div>
      </div>
      <div className="absolute top-[3px] right-[8px] flex items-center gap-[2px]">
        <button type="button" aria-label="Minimize view" className="h-[3px] w-[6px] border border-[#888]" />
        <Tool name="windows" size="size-[7px]" />
        <Tool name="viewMax" size="size-[7px]" />
      </div>
      <ViewCube />
      <div className="flex h-[10px] shrink-0 items-center bg-[#ececec] pl-[14px] text-[#555]">
        <span className="w-[21px]">1 : 1</span>
        <div className="flex items-center gap-[2px]">
          {['schedule', 'cube', 'sun', 'shadow', 'undo', 'crop', 'crop', 'home', 'glasses', 'info', 'shadow'].map((n, i) => (
            <Tool key={i} name={n} size="size-[8px]" />
          ))}
          <Caret className="text-[#555]" />
        </div>
        <div className="flex flex-1 items-center justify-end gap-[128px] pr-[10px]">
          <span className="h-[6px] w-[8px] border border-[#aaa] bg-[#f7f7f7]" />
          <svg viewBox="0 0 4 6" className="h-[3px] w-[2px]" aria-hidden="true"><path d="M0 0l4 3-4 3z" fill="#666" /></svg>
        </div>
      </div>
    </main>
  );
}

function StatusBar() {
  return (
    <footer className="flex h-[10px] shrink-0 items-center bg-linear-to-b from-[#dcdedd] to-[#cccfce] leading-[10px] whitespace-nowrap text-[#333]">
      <span className="w-[165px] shrink-0 pl-[1px]">Generic Models : Mechanical_Equipment-Fabricated_Products-Hyd</span>
      <Icon name="recycle" className="mr-[4px] size-[9px]" />
      <div className="flex h-full w-[94px] shrink-0 items-center bg-white pr-[3px]">
        <select aria-label="Active workset" className="h-full min-w-0 flex-1 appearance-none" />
        <Caret />
      </div>
      <div className="flex w-[51px] shrink-0 items-center gap-[4px] pl-[3px]">
        <Tool name="key" size="size-[7px]" />
        <Tool name="dot" size="size-[6px]" />
        <span className="w-[2px]" />
        <Tool name="schedule" size="size-[8px]" />
        <Tool name="schedule" size="size-[8px]" />
      </div>
      <div className="flex h-full w-[71px] shrink-0 items-center bg-white pr-[2px]">
        <select aria-label="Design option" className="h-full min-w-0 flex-1 appearance-none pl-[1px] leading-[10px] text-[#888]">
          <option>Main Model</option>
        </select>
        <Caret />
      </div>
      <div className="flex flex-1 items-center justify-end gap-[7px] pr-[29px]">
        <label className="flex items-center gap-[2px]">
          <input type="checkbox" className="size-[6px] appearance-none border border-[#777] bg-white" />
          Press &amp; Drag
        </label>
        <button type="button" className="flex items-center">
          <Icon name="filter" className="size-[8px]" />
          :0
        </button>
      </div>
    </footer>
  );
}

export default function App() {
  return (
    <div className="flex h-screen min-h-[460px] flex-col overflow-hidden bg-white py-[10px] font-['Noto_Sans','Open_Sans',sans-serif] text-[5px] leading-[7px]">
      <TitleArea />
      <Ribbon />
      <QuickBar />
      <div className="h-[15px] shrink-0 border-b border-[#c3cbbe] bg-[#d9e5d3] pl-[2px] leading-[16px] text-[#333]">Modify | Generic Models</div>
      <div className="flex min-h-0 flex-1 bg-[#d7dadd]">
        <Sidebar />
        <div className="w-[3px] shrink-0" />
        <Canvas />
      </div>
      <StatusBar />
    </div>
  );
}
